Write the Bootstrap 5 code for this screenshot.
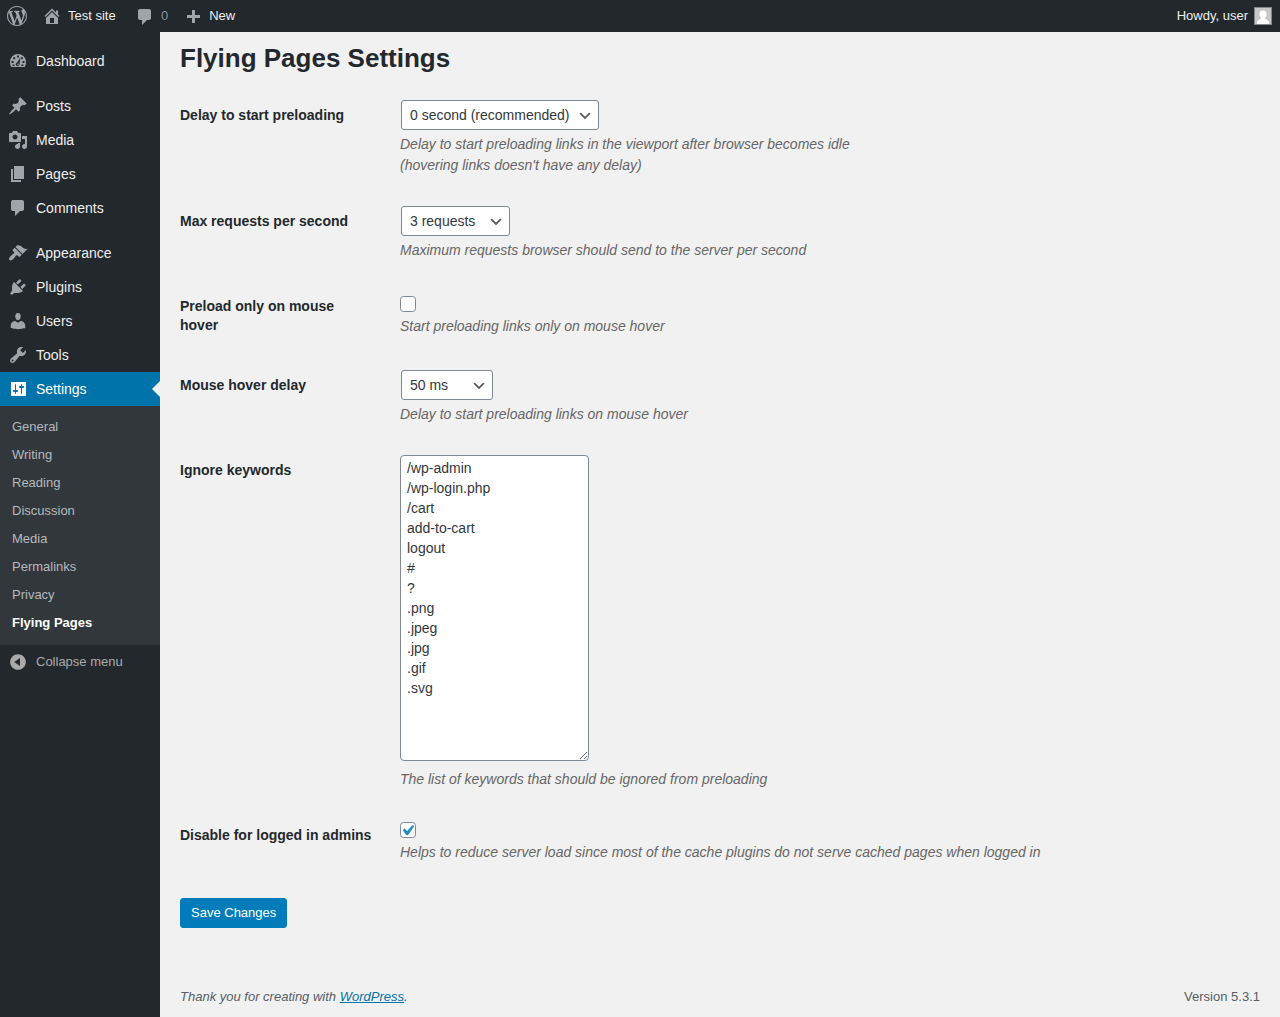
<!DOCTYPE html>
<html lang="en">
<head>
<meta charset="utf-8">
<meta name="viewport" content="width=device-width, initial-scale=1">
<title>Flying Pages Settings</title>
<link href="https://cdn.jsdelivr.net/npm/bootstrap@5.3.0/dist/css/bootstrap.min.css" rel="stylesheet">
<style>
body { font-family: "Liberation Sans", Arial, sans-serif; font-size: 14px; line-height: 20px; color: #444; background: #f1f1f1; }
.icon { width: 20px; height: 20px; flex: none; fill: #a0a5aa; }

/* Top toolbar */
.adminbar { height: 32px; background: #23282d; font-size: 13px; }
.adminbar a { color: #eee; text-decoration: none; height: 32px; padding: 0 8px 0 7px; gap: 6px; }
.adminbar .count { color: #8c9196; }
.adminbar .site-name { min-width: 52px; }
.avatar { width: 18px; height: 18px; border: 1px solid #82878c; }

/* Side menu */
.sidemenu { width: 160px; flex: none; background: #23282d; padding-top: 12px; }
.menu-item { height: 34px; padding: 0 8px; gap: 8px; color: #eee; text-decoration: none; }
.menu-gap { margin-top: 11px; }
.menu-item.current { background: #0073aa; color: #fff; }
.menu-item.current .icon { fill: #fff; }
.menu-item.current::after { content: ""; position: absolute; right: 0; top: 9px; border: 8px solid transparent; border-left: 0; border-right-color: #f1f1f1; }
.submenu { background: #32373c; padding: 7px 0 8px; font-size: 13px; }
.submenu a { display: block; padding: 4px 12px; color: #b4b9be; text-decoration: none; }
.submenu a.current { color: #fff; font-weight: 700; }
.collapse-btn { font-size: 13px; color: #aaa; border: 0; background: none; }
.collapse-btn .icon { fill: #aaa; }

/* Settings form */
.content { padding: 0 20px; }
.page-heading { font-size: 26px; line-height: 32px; font-weight: 700; color: #23282d; margin: 10px 0 11px; }
.setting { display: flex; align-items: center; }
.setting-label { width: 210px; flex: none; align-self: flex-start; padding: 21px 16px 20px 0; line-height: 19px; font-weight: 700; color: #23282d; }
.setting-field { padding: 15px 10px; }
.setting-help { margin: 4px 0 0; line-height: 21px; font-style: italic; color: #666; }
.form-select { width: auto; height: 30px; margin-left: 1px; padding: 0 24px 0 8px; font-size: 14px; line-height: 28px; color: #32373c; border-color: #7e8993; border-radius: 3px;
  background: #fff url("data:image/svg+xml,%3Csvg xmlns='http://www.w3.org/2000/svg' viewBox='0 0 20 20'%3E%3Cpath d='M5 6l5 5 5-5 2 1-7 7-7-7 2-1z' fill='%23555'/%3E%3C/svg%3E") no-repeat right 5px top 55% / 16px 16px; }
.select-long { width: 198px; }
.select-mid { width: 109px; }
.select-short { width: 92px; }
.keywords { display: block; width: 189px; margin-bottom: 8px; padding: 2px 6px; font-size: 14px; line-height: 20px; color: #32373c; border-color: #7e8993; border-radius: 4px; overflow: auto; }
.form-check-input { display: block; width: 16px; height: 16px; margin: 2px 0 0; border-color: #7e8993; }
.form-check-input:checked[type=checkbox] { background: #fff url("data:image/svg+xml,%3Csvg xmlns='http://www.w3.org/2000/svg' viewBox='0 0 20 20'%3E%3Cpath d='M14.83 4.89l1.34.94-5.81 8.38H9.02L5.78 9.67l1.34-1.25 2.57 2.4z' fill='%231e8cbe' stroke='%231e8cbe' stroke-width='.5'/%3E%3C/svg%3E") no-repeat -4px -3px / 21px 21px; border-color: #7e8993; }
.save-btn { height: 30px; margin-top: 20px; padding: 0 10px; font-size: 13px; line-height: 28px; border-radius: 3px; color: #fff; background: #007cba; border-color: #007cba; }
.pagefoot { padding: 10px 0; font-size: 13px; color: #555d66; }
.pagefoot a { color: #0073aa; }
</style>
<script src="https://cdn.jsdelivr.net/npm/bootstrap@5.3.0/dist/js/bootstrap.bundle.min.js"></script>
</head>
<body class="d-flex flex-column min-vh-100">

<header class="adminbar d-flex justify-content-between">
  <nav class="d-flex" aria-label="Toolbar">
    <a href="#" class="d-flex align-items-center" aria-label="About WordPress"><svg class="icon" viewBox="0 0 20 20"><path d="M20 10c0-5.51-4.49-10-10-10C4.48 0 0 4.49 0 10c0 5.52 4.48 10 10 10 5.51 0 10-4.48 10-10zM7.78 15.37L4.37 6.22c.55-.02 1.17-.08 1.17-.08.5-.06.44-1.13-.06-1.11 0 0-1.45.11-2.37.11-.18 0-.37 0-.58-.01C4.12 2.69 6.87 1.11 10 1.11c2.33 0 4.45.87 6.05 2.34-.68-.11-1.65.39-1.65 1.58 0 .74.45 1.36.9 2.1.35.61.55 1.36.55 2.46 0 1.49-1.4 5-1.4 5l-3.03-8.37c.54-.02.82-.17.82-.17.5-.05.44-1.25-.06-1.22 0 0-1.44.12-2.38.12-.87 0-2.33-.12-2.33-.12-.5-.03-.56 1.2-.06 1.22l.92.08 1.26 3.41zM17.41 10c.24-.64.74-1.87.43-4.25.7 1.29 1.05 2.71 1.05 4.25 0 3.29-1.73 6.24-4.4 7.78.97-2.59 1.94-5.2 2.92-7.78zM6.1 18.09C3.12 16.65 1.11 13.53 1.11 10c0-1.3.23-2.48.72-3.59C3.25 10.3 4.67 14.2 6.1 18.09zm4.03-6.63l2.58 6.98c-.86.29-1.76.45-2.71.45-.79 0-1.57-.11-2.29-.33.81-2.38 1.62-4.74 2.42-7.1z"/></svg></a>
    <a href="#" class="d-flex align-items-center"><svg class="icon" viewBox="0 0 20 20"><path d="M16 8.5l1.53 1.53-1.06 1.06L10 4.6l-6.47 6.49-1.06-1.06L10 2.5l4 4v-2h2v4zm-6-2.46l6 5.99V18H4v-5.97zM12 17v-5H8v5h4z"/></svg><span class="site-name">Test site</span></a>
    <a href="#" class="d-flex align-items-center"><svg class="icon" viewBox="0 0 20 20"><path d="M5 3h9c1.1 0 2 .9 2 2v7c0 1.1-.9 2-2 2h-2l-5 5v-5H5c-1.1 0-2-.9-2-2V5c0-1.1.9-2 2-2z"/></svg><span class="count">0</span></a>
    <a href="#" class="d-flex align-items-center"><svg class="icon" viewBox="0 0 20 20"><path d="M17 9v3h-5v5H9v-5H4V9h5V4h3v5h5z"/></svg><span>New</span></a>
  </nav>
  <a href="#" class="d-flex align-items-center"><span>Howdy, user</span><svg class="avatar" viewBox="0 0 16 16"><path fill="#c8c8c8" d="M0 0h16v16H0z"/><path fill="#fff" d="M8 2.500a3.700 3.700 0 0 1 3.600 3.800c0 1.700-.8 2.900-1.800 3.700v.8c2.200.4 4.200 1.400 4.200 3.600V16H2v-1.600c0-2.200 2-3.200 4.200-3.600V10C5.200 9.200 4.400 8 4.400 6.300A3.700 3.700 0 0 1 8 2.500z"/></svg></a>
</header>

<div class="d-flex flex-grow-1">
  <nav class="sidemenu" aria-label="Main menu">
    <a href="#" class="menu-item d-flex align-items-center"><svg class="icon" viewBox="0 0 20 20"><path fill-rule="evenodd" d="M3.400 16h13.200C17.500 14.700 18 12.900 18 11a8 8 0 0 0-16 0c0 1.900.5 3.700 1.400 5zM9 4.500h2v2H9zM5.200 6.200h2v2h-2zM12.800 6.200h2v2h-2zM3.500 10h2v2h-2zM14.500 10h2v2h-2zM4.600 13.400h2v1.600h-2zM13.400 13.400h2v1.600h-2zM12.200 6.800L11.600 13.200a1.900 1.900 0 1 1-2.500-1.700zM9.500 12.600v1.600h1.200v-1.600z"/></svg><span>Dashboard</span></a>
    <a href="#" class="menu-item menu-gap d-flex align-items-center"><svg class="icon" viewBox="0 0 20 20"><path d="M10.440 3.020l1.820-1.820 6.360 6.350-1.830 1.820c-1.050-.68-2.480-.57-3.410.36l-.75.75c-.92.93-1.040 2.350-.35 3.410l-1.830 1.820-2.410-2.410-2.800 2.790c-.42.42-3.380 2.710-3.800 2.290s1.860-3.390 2.280-3.810l2.790-2.790L4.100 9.360l1.830-1.820c1.050.69 2.480.57 3.400-.36l.75-.75c.93-.92 1.050-2.350.36-3.410z"/></svg><span>Posts</span></a>
    <a href="#" class="menu-item d-flex align-items-center"><svg class="icon" viewBox="0 0 20 20"><path d="M13 11V4c0-.55-.45-1-1-1h-1.670L9 1H5L3.670 3H2c-.55 0-1 .45-1 1v7c0 .55.45 1 1 1h10c.55 0 1-.45 1-1zM7 4.500c1.380 0 2.500 1.120 2.500 2.500S8.380 9.500 7 9.500 4.500 8.380 4.500 7 5.620 4.500 7 4.500zM14 6h5v10.500c0 1.380-1.120 2.500-2.500 2.500S14 17.880 14 16.500s1.120-2.500 2.500-2.500c.17 0 .34.02.5.05V9h-3V6zm-4 8.050V13h2v3.500c0 1.380-1.120 2.500-2.500 2.500S7 17.880 7 16.500 8.120 14 9.500 14c.17 0 .34.02.5.05z"/></svg><span>Media</span></a>
    <a href="#" class="menu-item d-flex align-items-center"><svg class="icon" viewBox="0 0 20 20"><path d="M6 15V2h10v13H6zm-1 1h8v2H3V5h2v11z"/></svg><span>Pages</span></a>
    <a href="#" class="menu-item d-flex align-items-center"><svg class="icon" viewBox="0 0 20 20"><path d="M5 2h9c1.100 0 2 .9 2 2v7c0 1.100-.9 2-2 2h-2l-5 5v-5H5c-1.100 0-2-.9-2-2V4c0-1.100.9-2 2-2z"/></svg><span>Comments</span></a>
    <a href="#" class="menu-item menu-gap d-flex align-items-center"><svg class="icon" viewBox="0 0 20 20"><path d="M14.480 11.060L7.410 3.990l1.500-1.500c.5-.56 2.300-.47 3.510.32 1.210.8 1.430 1.280 2.910 2.100 1.180.64 2.450 1.260 4.450.85zm-.71.71L6.700 4.700 4.930 6.470c-.39.39-.39 1.020 0 1.410l1.060 1.060c.39.39.39 1.030 0 1.420-.6.6-1.430 1.110-2.210 1.690-.35.26-.7.53-1.010.84C1.430 14.230.4 16.080 1.400 17.070c.99 1 2.840-.03 4.180-1.360.31-.31.58-.66.85-1.020.57-.78 1.080-1.610 1.690-2.210.39-.39 1.020-.39 1.410 0l1.060 1.060c.39.39 1.020.39 1.410 0z"/></svg><span>Appearance</span></a>
    <a href="#" class="menu-item d-flex align-items-center"><svg class="icon" viewBox="0 0 20 20"><path d="M13.110 4.360L9.870 7.600 8 5.730l3.240-3.240c.35-.34 1.050-.2 1.560.32.52.51.66 1.210.31 1.550zm-8 1.770l.91-1.120 9.010 9.010-1.190.84c-.71.71-2.630 1.160-3.820 1.160H6.140L4.900 17.260c-.59.59-1.540.59-2.120 0-.59-.58-.59-1.530 0-2.120l1.240-1.240v-3.880c0-1.130.4-3.190 1.090-3.890zm7.260 3.970l3.240-3.240c.34-.35 1.040-.21 1.550.31.52.51.66 1.210.31 1.550l-3.240 3.250z"/></svg><span>Plugins</span></a>
    <a href="#" class="menu-item d-flex align-items-center"><svg class="icon" viewBox="0 0 20 20"><path d="M10 9.250c-2.270 0-2.730-3.440-2.730-3.440C7 4.020 7.820 2 9.970 2c2.160 0 2.980 2.020 2.710 3.810 0 0-.41 3.440-2.680 3.440zm0 2.570L12.720 10c2.390 0 4.520 2.330 4.520 4.530v2.490s-3.650 1.130-7.240 1.130c-3.650 0-7.240-1.130-7.240-1.130v-2.490c0-2.250 1.940-4.480 4.470-4.480z"/></svg><span>Users</span></a>
    <a href="#" class="menu-item d-flex align-items-center"><svg class="icon" viewBox="0 0 20 20"><path d="M16.680 9.770c-1.340 1.340-3.300 1.670-4.950.99l-5.410 6.520c-.99.99-2.590.99-3.580 0s-.99-2.590 0-3.570l6.520-5.420c-.68-1.650-.35-3.610.99-4.950 1.280-1.280 3.120-1.620 4.720-1.060l-2.890 2.890 2.820 2.820 2.860-2.870c.53 1.580.18 3.390-1.080 4.650zM3.810 16.210c.4.39 1.040.39 1.430 0 .4-.4.4-1.040 0-1.430-.39-.4-1.030-.4-1.430 0-.39.39-.39 1.030 0 1.430z"/></svg><span>Tools</span></a>
    <a href="#" class="menu-item current d-flex align-items-center position-relative" aria-current="true"><svg class="icon" viewBox="0 0 20 20"><path d="M18 16V4c0-.55-.45-1-1-1H4c-.55 0-1 .45-1 1v12c0 .55.45 1 1 1h13c.55 0 1-.45 1-1zM8 11h1c.55 0 1 .45 1 1s-.45 1-1 1H8v1.500c0 .28-.22.5-.5.5s-.5-.22-.5-.5V13H6c-.55 0-1-.45-1-1s.45-1 1-1h1V5.500c0-.28.22-.5.5-.5s.5.22.5.5V11zm5-2h-1c-.55 0-1-.45-1-1s.45-1 1-1h1V5.500c0-.28.22-.5.5-.5s.5.22.5.5V7h1c.55 0 1 .45 1 1s-.45 1-1 1h-1v5.500c0 .28-.22.5-.5.5s-.5-.22-.5-.5V9z"/></svg><span>Settings</span></a>
    <div class="submenu">
      <a href="#">General</a>
      <a href="#">Writing</a>
      <a href="#">Reading</a>
      <a href="#">Discussion</a>
      <a href="#">Media</a>
      <a href="#">Permalinks</a>
      <a href="#">Privacy</a>
      <a href="#" class="current" aria-current="page">Flying Pages</a>
    </div>
    <button type="button" class="menu-item collapse-btn d-flex align-items-center"><svg class="icon" viewBox="0 0 20 20"><path fill-rule="evenodd" d="M10 2.160c4.330 0 7.840 3.510 7.840 7.840s-3.510 7.840-7.840 7.840S2.160 14.330 2.160 10 5.710 2.160 10 2.160zm2 11.720V6.120L6.180 9.970z"/></svg><span>Collapse menu</span></button>
  </nav>

  <main class="content flex-grow-1 d-flex flex-column">
    <form>
      <h1 class="page-heading">Flying Pages Settings</h1>
      <div class="setting">
        <label class="setting-label" for="delay">Delay to start preloading</label>
        <div class="setting-field">
          <select id="delay" class="form-select select-long"><option>0 second (recommended)</option></select>
          <p class="setting-help">Delay to start preloading links in the viewport after browser becomes idle<br>(hovering links doesn't have any delay)</p>
        </div>
      </div>
      <div class="setting">
        <label class="setting-label" for="maxreq">Max requests per second</label>
        <div class="setting-field">
          <select id="maxreq" class="form-select select-mid"><option>3 requests</option></select>
          <p class="setting-help">Maximum requests browser should send to the server per second</p>
        </div>
      </div>
      <div class="setting">
        <label class="setting-label" for="hoveronly">Preload only on mouse hover</label>
        <div class="setting-field">
          <input id="hoveronly" type="checkbox" class="form-check-input">
          <p class="setting-help">Start preloading links only on mouse hover</p>
        </div>
      </div>
      <div class="setting">
        <label class="setting-label" for="hoverdelay">Mouse hover delay</label>
        <div class="setting-field">
          <select id="hoverdelay" class="form-select select-short"><option>50 ms</option></select>
          <p class="setting-help">Delay to start preloading links on mouse hover</p>
        </div>
      </div>
      <div class="setting">
        <label class="setting-label" for="keywords">Ignore keywords</label>
        <div class="setting-field">
          <textarea id="keywords" class="form-control keywords" rows="15" spellcheck="false">/wp-admin
/wp-login.php
/cart
add-to-cart
logout
#
?
.png
.jpeg
.jpg
.gif
.svg</textarea>
          <p class="setting-help">The list of keywords that should be ignored from preloading</p>
        </div>
      </div>
      <div class="setting">
        <label class="setting-label" for="admins">Disable for logged in admins</label>
        <div class="setting-field">
          <input id="admins" type="checkbox" class="form-check-input" checked>
          <p class="setting-help">Helps to reduce server load since most of the cache plugins do not serve cached pages when logged in</p>
        </div>
      </div>
      <button type="submit" class="btn save-btn">Save Changes</button>
    </form>
    <footer class="pagefoot d-flex justify-content-between mt-auto">
      <span class="fst-italic">Thank you for creating with <a href="#">WordPress</a>.</span>
      <span>Version 5.3.1</span>
    </footer>
  </main>
</div>
</body>
</html>
